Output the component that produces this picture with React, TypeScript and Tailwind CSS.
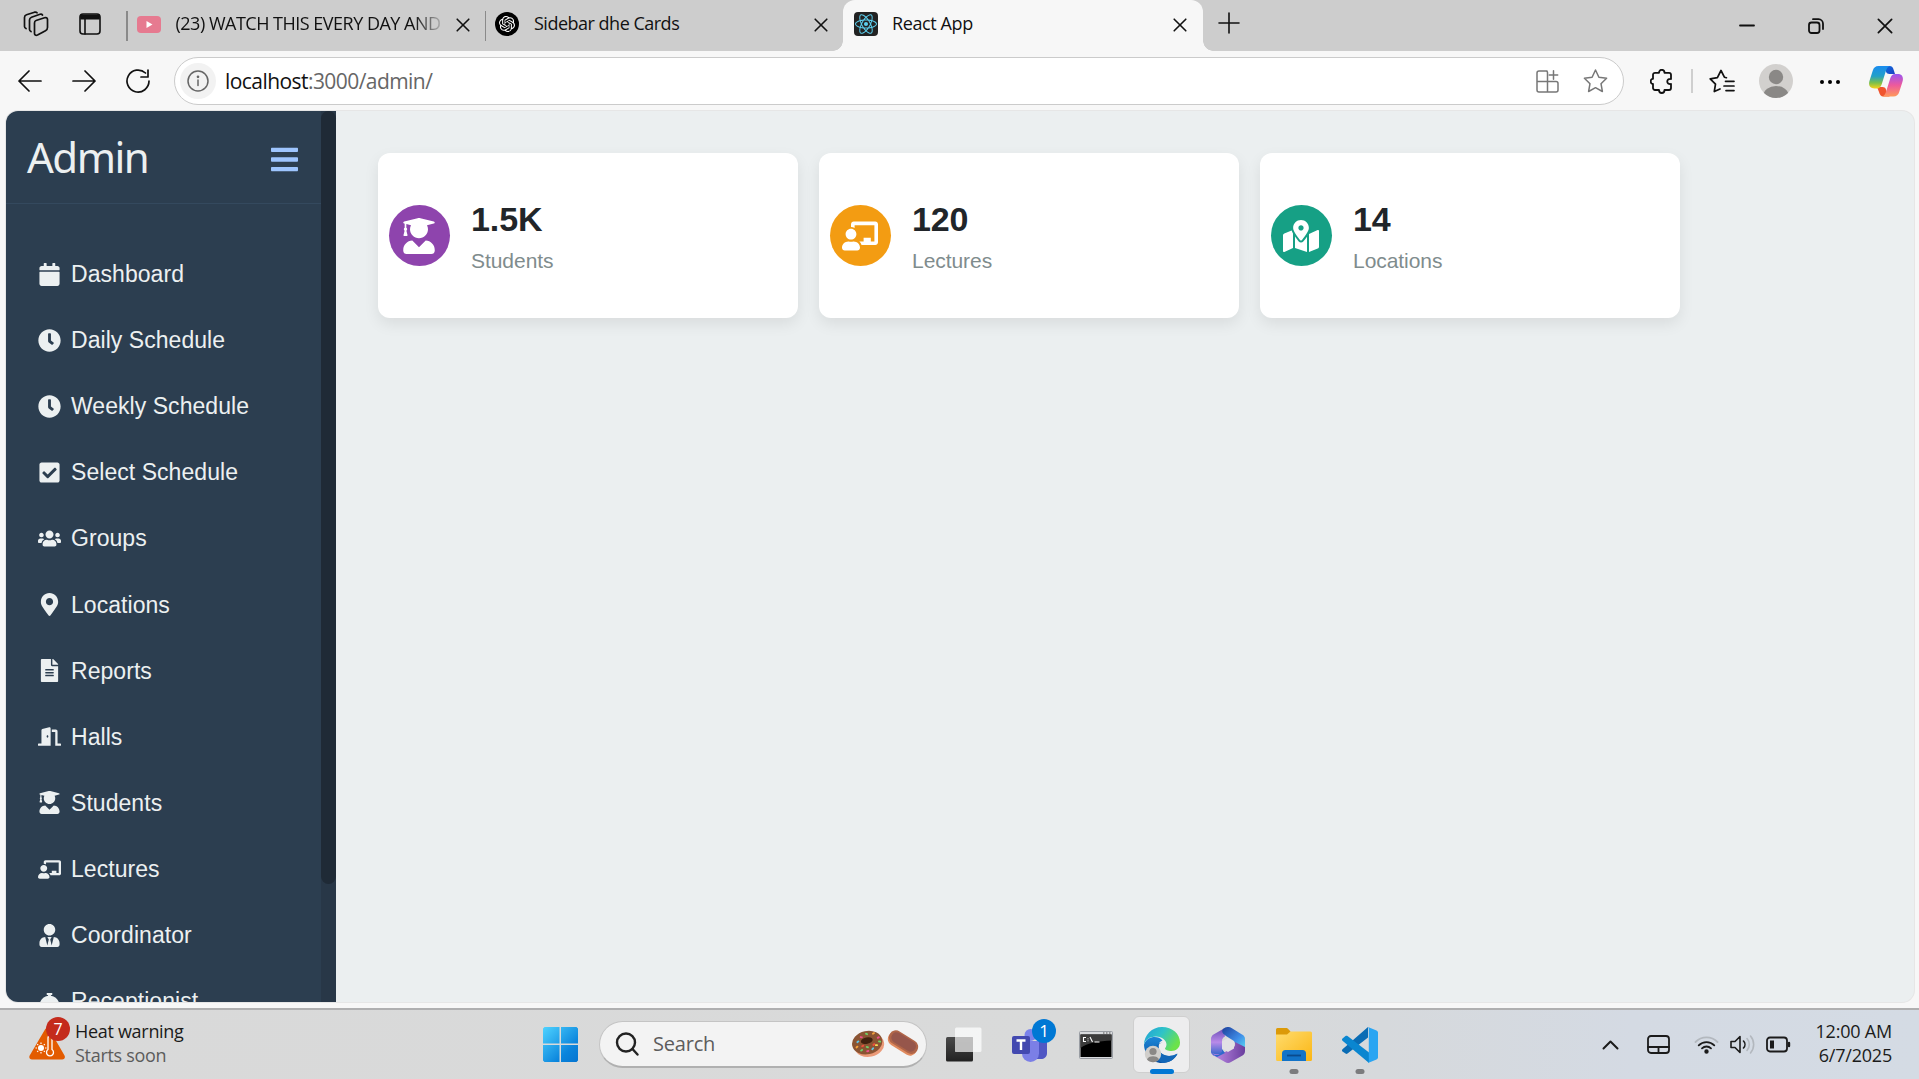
import type { ReactNode } from "react";
import type { IconType } from "react-icons";
import {
  FaBars,
  FaCalendar,
  FaChalkboardTeacher,
  FaCheckSquare,
  FaClock,
  FaConciergeBell,
  FaDoorOpen,
  FaFileAlt,
  FaMapMarkedAlt,
  FaMapMarkerAlt,
  FaUserGraduate,
  FaUsers,
  FaUserTie,
} from "react-icons/fa";
import { SiOpenai, SiReact } from "react-icons/si";

function Line({ w, h, vb, sw = 1.5, className = "", children }: { w: number; h: number; vb?: string; sw?: number; className?: string; children: ReactNode }) {
  return (
    <svg
      width={w}
      height={h}
      viewBox={vb ?? `0 0 ${w} ${h}`}
      fill="none"
      stroke="currentColor"
      strokeWidth={sw}
      strokeLinecap="round"
      strokeLinejoin="round"
      className={`block shrink-0 ${className}`}
    >
      {children}
    </svg>
  );
}

function CloseX({ size = 14, sw = 1.6 }: { size?: number; sw?: number }) {
  return (
    <Line w={size} h={size} vb="0 0 14 14" sw={sw}>
      <path d="M1.200 1.200 12.800 12.800M12.800 1.200 1.200 12.800" />
    </Line>
  );
}

function TabStrip() {
  return (
    <div className="flex h-[51px] shrink-0 items-center bg-[#cdcdcd] pb-[3px] text-[18px] leading-[24px] tracking-[-0.5px] text-[#111]">
      <Line w={26} h={26} className="ml-[23px]" sw={1.7}>
        <path d="M13 9.5 21.5 6.7C23 6.2 24.500 7 24.500 8.500V16.500C24.500 18 24 19 22.500 19.800L14.500 24C12.800 24.800 11.500 24 11.500 22.500V12C11.500 10.500 12 9.800 13 9.500Z" />
        <path d="M8 20.500C7 20 6.500 19.500 6.500 18.500V9C6.500 7.500 7 6.800 8.500 6.200L17 3.300C18 3 19 3.300 19.500 4" />
        <path d="M3 17.500C2 17 1.500 16.500 1.500 15.500V6.500C1.500 5 2 4.300 3.500 3.800L11.500 1.200C12.500 1 13.500 1.200 14 1.800" />
      </Line>
      <Line w={22} h={22} className="ml-[30px]" sw={1.6}>
        <rect x="1" y="1" width="20" height="20" rx="3" />
        <path d="M6 6v15" />
        <path d="M2 2.200h18v3.600H2Z" fill="currentColor" />
      </Line>
      <div className="mt-[3px] ml-[25px] h-[30px] w-[1.500px] bg-[#8a8a8a]" />
      <svg width="24" height="17" viewBox="0 0 24 17" className="ml-[9px] block shrink-0">
        <rect width="24" height="17" rx="4" fill="#e67a90" />
        <path d="M9.500 5v7l6-3.500Z" fill="#fff" />
      </svg>
      <div className="-mt-[2px] ml-[15px] w-[267px] whitespace-nowrap tracking-[-0.5px] [mask-image:linear-gradient(to_right,black_238px,transparent_270px)]">
        (23) WATCH THIS EVERY DAY AND
      </div>
      <div className="mt-px ml-[13px]">
        <CloseX />
      </div>
      <div className="mt-[3px] ml-[15px] h-[30px] w-[1.500px] bg-[#8a8a8a]" />
      <div className="ml-[9px] flex size-6 items-center justify-center rounded-full bg-black">
        <SiOpenai className="size-[16px] text-white" />
      </div>
      <div className="-mt-[2px] ml-[15px] w-[280px] whitespace-nowrap">Sidebar dhe Cards</div>
      <div className="mt-px">
        <CloseX />
      </div>
      <div className="relative -mb-[3px] ml-[15px] flex w-[360px] items-center self-stretch rounded-t-[12px] bg-[#f7f7f7] pb-[3px]">
        <div className="absolute bottom-0 -left-[10px] size-[10px] bg-[radial-gradient(circle_at_0_0,transparent_9.500px,#f7f7f7_10px)]" />
        <div className="absolute -right-[10px] bottom-0 size-[10px] bg-[radial-gradient(circle_at_100%_0,transparent_9.500px,#f7f7f7_10px)]" />
        <div className="ml-[11px] flex size-6 items-center justify-center rounded-[4px] bg-[#222]">
          <SiReact className="size-[22px] text-[#5ccfee]" />
        </div>
        <div className="-mt-[2px] ml-[14px] w-[281px] tracking-[-0.4px]">React App</div>
        <div className="mt-px">
          <CloseX />
        </div>
      </div>
      <Line w={22} h={22} className="-mt-[2px] ml-[15px]" sw={1.600}>
        <path d="M11 1v20M1 11h20" />
      </Line>
      <Line w={16} h={16} className="mt-[3px] ml-auto" sw={1.800}>
        <path d="M1 7.500h14" />
      </Line>
      <Line w={16} h={16} className="mt-[3px] ml-[53px]" sw={1.800}>
        <rect x="1" y="4.500" width="10.500" height="10.500" rx="2.500" />
        <path d="M5 1.200h5.500a4.500 4.500 0 0 1 4.500 4.500V11" />
      </Line>
      <div className="mt-[3px] mr-[26px] ml-[53px]">
        <CloseX size={16} sw={1.500} />
      </div>
    </div>
  );
}

function CopilotLogo() {
  return (
    <svg width="34" height="31" viewBox="0 0 34 31" className="ml-[29px] block shrink-0">
      <defs>
        <linearGradient id="cpA" x1="0" y1="0" x2="0" y2="1">
          <stop offset="0" stopColor="#1a8cf0" />
          <stop offset=".45" stopColor="#22a0c8" />
          <stop offset=".75" stopColor="#7cc04a" />
          <stop offset="1" stopColor="#f8d21a" />
        </linearGradient>
        <linearGradient id="cpB" x1="0" y1="0" x2="0" y2="1">
          <stop offset="0" stopColor="#9b55f0" />
          <stop offset=".5" stopColor="#ee5a9c" />
          <stop offset="1" stopColor="#ff9a5a" />
        </linearGradient>
        <linearGradient id="cpC" x1="0" y1="0" x2="1" y2="1">
          <stop offset="0" stopColor="#0f6fe0" />
          <stop offset="1" stopColor="#1c3fc0" />
        </linearGradient>
      </defs>
      <path d="M17 0h3.500C23 0 24 1.500 24.700 4L26 8h-5.500C17 8 17 5 16 3Z" fill="url(#cpC)" />
      <path d="M8 21h5.500C17 21 17 24 18 26.500c.5 2 1.500 3.500 3 4h-6.500c-2.700 0-3.800-2-4.500-4.500Z" fill="#f0552e" />
      <path d="M9.500 0H21c-2.500.5-3.500 3-4.300 5.500L12.800 18c-.8 2.600-2.300 4.500-5 4.500H5.500C.5 22.500-.8 19 .6 14.500L3.800 4.500C4.700 1.700 6.500 0 9.500 0Z" fill="url(#cpA)" />
      <path d="M24.500 30.500H13c2.500-.5 3.500-3 4.300-5.500l3.900-12.500c.8-2.600 2.300-4.500 5-4.500h2.300c5 0 6.300 3.500 4.900 8l-3.200 10c-.9 2.800-2.700 4.500-5.700 4.500Z" fill="url(#cpB)" />
    </svg>
  );
}

function Toolbar() {
  return (
    <div className="flex h-[60px] shrink-0 items-center bg-[#f7f7f7] text-[#111]">
      <Line w={24} h={22} className="ml-[18px]" sw={1.700}>
        <path d="M23 11H1M11 1 1 11l10 10" />
      </Line>
      <Line w={24} h={22} className="ml-[30px]" sw={1.700}>
        <path d="M1 11h22M13 1l10 10-10 10" />
      </Line>
      <Line w={24} h={24} className="ml-[30px]" sw={1.700}>
        <path d="M23 12A11 11 0 1 1 19.500 4M22 1v7h-7" />
      </Line>
      <div className="ml-[24px] flex h-12 w-[1450px] items-center rounded-full border border-[#cbcbcb] bg-white">
        <div className="ml-[5px] flex size-9 items-center justify-center rounded-full bg-[#f2f2f2] text-[#666]">
          <Line w={22} h={22} sw={1.500}>
            <circle cx="11" cy="11" r="10" />
            <path d="M11 10v5.500" />
            <circle cx="11" cy="6.800" r=".6" fill="currentColor" />
          </Line>
        </div>
        <div className="ml-[9px] text-[21px] leading-[28px] tracking-[-0.56px] whitespace-nowrap">
          localhost<span className="text-[#666]">:3000/admin/</span>
        </div>
        <Line w={23} h={23} className="ml-auto text-[#777]" sw={1.500}>
          <path d="M11 1H3a2 2 0 0 0-2 2v17a2 2 0 0 0 2 2h17a2 2 0 0 0 2-2v-6.500a2 2 0 0 0-2-2H1M11.500 22V2.500A1.500 1.500 0 0 0 10 1M17.500.8v8.400M13.300 5h8.400" />
        </Line>
        <Line w={25} h={24} className="mr-[15px] ml-[24px] text-[#777]" sw={1.500}>
          <path d="m12.500 1 3.400 7.200 7.700 1-5.600 5.500 1.400 7.800-6.900-3.800-6.900 3.800L7 14.700 1.400 9.200l7.700-1Z" />
        </Line>
      </div>
      <Line w={23} h={25} className="ml-[26px]" sw={1.800}>
        <path d="M5 3.800h4c0-4 5.500-4 5.500 0H19a2 2 0 0 1 2 2v4.200c-5-.8-5 5.800 0 5V19a2 2 0 0 1-2 2h-4.500c0 4-5.500 4-5.500 0H5a2 2 0 0 1-2-2v-4c-3 .2-3-5.500 0-5.200V5.800a2 2 0 0 1 2-2Z" />
      </Line>
      <div className="ml-[18px] h-6 w-[1.500px] bg-[#cfcfcf]" />
      <Line w={26} h={24} className="ml-[16px]" sw={1.700}>
        <path d="M11 20 5.300 22.500l1.200-7.300L1.200 9.800l7.200-1.100L12 1.500l3.400 6.700 2 .5M16.500 12.300H25M15 17h10M17 21.600h8" />
      </Line>
      <svg width="34" height="34" viewBox="0 0 34 34" className="ml-[24px] block shrink-0">
        <clipPath id="av">
          <circle cx="17" cy="17" r="17" />
        </clipPath>
        <g clipPath="url(#av)">
          <rect width="34" height="34" fill="#d2d0ce" />
          <circle cx="17" cy="13" r="7.200" fill="#8a8886" />
          <ellipse cx="17" cy="31" rx="12.500" ry="9" fill="#8a8886" />
        </g>
      </svg>
      <svg width="20" height="6" viewBox="0 0 20 6" className="mt-[2px] ml-[27px] block shrink-0">
        <circle cx="2" cy="3" r="2" />
        <circle cx="10" cy="3" r="2" />
        <circle cx="18" cy="3" r="2" />
      </svg>
      <CopilotLogo />
    </div>
  );
}

const menu: { icon: IconType; label: string }[] = [
  { icon: FaCalendar, label: "Dashboard" },
  { icon: FaClock, label: "Daily Schedule" },
  { icon: FaClock, label: "Weekly Schedule" },
  { icon: FaCheckSquare, label: "Select Schedule" },
  { icon: FaUsers, label: "Groups" },
  { icon: FaMapMarkerAlt, label: "Locations" },
  { icon: FaFileAlt, label: "Reports" },
  { icon: FaDoorOpen, label: "Halls" },
  { icon: FaUserGraduate, label: "Students" },
  { icon: FaChalkboardTeacher, label: "Lectures" },
  { icon: FaUserTie, label: "Coordinator" },
  { icon: FaConciergeBell, label: "Receptionist" },
];

function Sidebar() {
  return (
    <aside className="flex w-[330px] shrink-0 bg-[#2c3e50] text-[#ecf0f1]">
      <div className="w-[315px] overflow-hidden">
        <div className="flex h-[93px] items-center justify-between border-b border-[#34495e] pr-[23px] pl-[21px]">
          <h2 className="font-['Noto_Sans',sans-serif] text-[42px] leading-[50px] tracking-[-1.500px]">Admin</h2>
          <FaBars className="mt-[5px] h-[31px] w-[27px] text-[#9ec5fe]" />
        </div>
        <nav className="pt-[37px] font-['Liberation_Sans',Arial,sans-serif]">
          {menu.map(({ icon: Icon, label }) => (
            <div key={label} className="flex h-[66.120px] items-center gap-[10px] pl-[32px] text-[23px] leading-[34px] tracking-[0.050px]">
              <Icon className="size-[23px] shrink-0" />
              <span>{label}</span>
            </div>
          ))}
        </nav>
      </div>
      <div className="w-[15px] bg-[#283747]">
        <div className="h-[773px] rounded-full bg-[#1f2a36]" />
      </div>
    </aside>
  );
}

function StatCard({ icon: Icon, tone, value, label }: { icon: IconType; tone: string; value: string; label: string }) {
  return (
    <div className="flex h-[165px] w-[420px] items-center rounded-[12px] bg-white pl-[11px] shadow-[0_6px_15px_rgba(0,0,0,0.08)]">
      <div className={`flex size-[61px] items-center justify-center rounded-full text-white ${tone}`}>
        <Icon className="mr-px size-[36px]" />
      </div>
      <div className="mt-[4px] ml-[21px]">
        <div className="text-[34px] leading-[40px] font-bold tracking-[-0.100px] text-[#212529]">{value}</div>
        <div className="mt-[6px] text-[21px] leading-[32px] tracking-[-0.05px] text-[#7f8c8d]">{label}</div>
      </div>
    </div>
  );
}

function WindowsLogo() {
  return (
    <svg width="35" height="35" viewBox="0 0 35 35" className="block shrink-0">
      <linearGradient id="win" x1="0" y1="0" x2="35" y2="35" gradientUnits="userSpaceOnUse">
        <stop offset="0" stopColor="#4fd3ff" />
        <stop offset=".7" stopColor="#0a84dc" />
        <stop offset="1" stopColor="#0574d0" />
      </linearGradient>
      <path d="M1.500 0H16.500V16.500H0V1.500ZM18 0h15.500L35 1.500v15H18ZM0 18h16.500v17h-15L0 33.500ZM18 18h17v15.500L33.500 35H18Z" fill="url(#win)" />
    </svg>
  );
}

const sprinkles = [
  [6, 9, "#5fc7e8"], [11, 5, "#f0508c"], [17, 3, "#6fd36a"], [23, 4, "#f6a23c"], [27, 9, "#f0508c"], [4, 14, "#f6a23c"],
  [8, 18, "#6fd36a"], [14, 20, "#f0508c"], [19, 19, "#5fc7e8"], [24, 16, "#f6e05c"], [28, 13, "#6fd36a"], [10, 14, "#f0503c"],
  [21, 15, "#f0503c"], [15, 16, "#6fd36a"],
] as const;

function SearchArt() {
  return (
    <svg width="67" height="28" viewBox="0 0 67 28" className="block shrink-0">
      <g transform="rotate(-12 16 14)">
        <ellipse cx="17" cy="15.500" rx="15" ry="11.500" fill="#eb9a78" />
        <ellipse cx="15.500" cy="12.500" rx="15.300" ry="11.700" fill="#8a5433" />
        <ellipse cx="15.500" cy="10.500" rx="6" ry="3.200" fill="#41210f" />
        {sprinkles.map(([x, y, c]) => (
          <rect key={`${x}-${y}`} x={x - 1.300} y={y} width="3" height="1.800" rx=".7" fill={c} transform={`rotate(${(x * 37) % 70 - 35} ${x} ${y})`} />
        ))}
      </g>
      <g transform="rotate(32 51 13)">
        <rect x="35" y="7" width="32" height="14" rx="7" fill="#e08a5e" />
        <rect x="35" y="5" width="32" height="14" rx="7" fill="#b06548" />
        <rect x="37.500" y="6.500" width="27" height="10.500" rx="5" fill="#96564b" />
      </g>
    </svg>
  );
}

function TaskViewIcon() {
  return (
    <svg width="36" height="35" viewBox="0 0 36 35">
      <linearGradient id="tv" x1="0" y1="0" x2="0" y2="1">
        <stop offset="0" stopColor="#4a4a4a" />
        <stop offset="1" stopColor="#222" />
      </linearGradient>
      <rect x="0" y="10" width="27" height="24.500" rx="1.500" fill="url(#tv)" />
      <rect x="9" y=".5" width="26.500" height="24.500" rx="1.500" fill="#fafafa" fillOpacity=".82" />
      <rect x="9" y="10" width="18" height="15" fill="#b5b5b5" fillOpacity=".75" />
    </svg>
  );
}

function TeamsIcon() {
  return (
    <svg width="36" height="36" viewBox="0 0 36 36">
      <circle cx="29" cy="8" r="4" fill="#4f55c8" />
      <path d="M22 14h13v12c0 4-3 6-6 6h-7Z" fill="#5057c4" />
      <circle cx="18.500" cy="8" r="6" fill="#7b83eb" />
      <path d="M10 14h17v12.500a8.500 8.500 0 0 1-17 0Z" fill="#7b7fe6" />
      <rect x="0" y="9" width="18" height="18" rx="2" fill="#4349b0" />
      <path d="M4.500 13.500h9M9 13.500v9.500" stroke="#fff" strokeWidth="2.400" />
    </svg>
  );
}

function TerminalIcon() {
  return (
    <svg width="34" height="28" viewBox="0 0 34 28">
      <rect x=".5" y=".5" width="33" height="27" rx="1" fill="#d8dadd" stroke="#999da3" />
      <rect x="1.500" y="3.500" width="31" height="22.500" fill="#000" />
      <path d="M1.500 3.500h31v6C20 10 8 12 1.500 17Z" fill="#3b3b3b" />
      <path d="M7 6.500H4.500v4H7M9 7.500v.8M9 9.500v.8M11 6l2.500 5M15.500 11h5" stroke="#fff" strokeWidth="1.100" fill="none" />
      <path d="M24 2h1.500M27 2h1.500M30 2h1.500" stroke="#555" strokeWidth="1.200" />
    </svg>
  );
}

function EdgeIcon() {
  return (
    <svg width="36" height="36" viewBox="0 0 36 36">
      <defs>
        <linearGradient id="edA" x1="0" y1="0" x2="1" y2=".5">
          <stop offset="0" stopColor="#1f9fd8" />
          <stop offset=".5" stopColor="#2fc3c8" />
          <stop offset="1" stopColor="#6be24a" />
        </linearGradient>
        <linearGradient id="edB" x1="0" y1="0" x2="0" y2="1">
          <stop offset="0" stopColor="#1b86d8" />
          <stop offset="1" stopColor="#0a4f9e" />
        </linearGradient>
      </defs>
      <path d="M0 17.500C0 26 7 36 18 36c7.500 0 13-4 15.500-9-8 4-19 2-19-8 0-3 2-5 4-5.500C14 8 3 9 0 17.500Z" fill="url(#edB)" />
      <path d="M0 18C0 8 8 0 18 0c10.500 0 18 7 18 15.500 0 5.500-4 8.500-8.500 8.500-3.500 0-6.500-1.200-6.500-2.500 0-.8 1.500-1.500 1.500-4 0-4-4.500-8-10.500-8C5.500 9.500 1 13 0 18Z" fill="url(#edA)" />
      <path d="M14.500 19c0 9 9 13 19 7.500-3 6-8.500 9.500-15 9.500-5-2-9-8-8-13 .5-4 4-7 8-7.500-2.500.5-4 1.500-4 3.500Z" fill="#1267b8" />
      <circle cx="9" cy="27" r="8.200" fill="#d0cecb" />
      <circle cx="9" cy="24.500" r="3.600" fill="#8a8886" />
      <path d="M3 32.500c1-4.500 11-4.500 12 0-3 3.500-9 3.500-12 0Z" fill="#8a8886" />
    </svg>
  );
}

function M365Icon() {
  return (
    <svg width="34" height="36" viewBox="0 0 34 36">
      <defs>
        <linearGradient id="mA" x1="0" y1="0" x2="0" y2="1">
          <stop offset="0" stopColor="#6b4fb8" />
          <stop offset=".5" stopColor="#b98ae8" />
          <stop offset="1" stopColor="#2a62c8" />
        </linearGradient>
        <linearGradient id="mB" x1="0" y1="0" x2="1" y2="1">
          <stop offset="0" stopColor="#1d3f9a" />
          <stop offset=".6" stopColor="#3f8de8" />
          <stop offset="1" stopColor="#5cd8f0" />
        </linearGradient>
        <linearGradient id="mC" x1="0" y1="0" x2="1" y2="0">
          <stop offset="0" stopColor="#c490ec" />
          <stop offset="1" stopColor="#6a3e9e" />
        </linearGradient>
      </defs>
      <path d="M13 1.500 2.500 7.500C1 8.500 0 10 0 12v12c0 3 2 5 5 5s6-2 6-6v-9c0-2 1-3.500 3-4.500Z" fill="url(#mA)" />
      <path d="M12 2c3-2.500 6-2.500 8.500-1L31 7.500c2 1 3 2.500 3 4.500v10l-10-6-1-2-8-5c-3-2-5-4-3-7Z" fill="url(#mB)" />
      <path d="M0 24.500c0 3 9 4 14 .5l9-5c1.500-1 1-3 1-5l10 5v4c0 2-1 3.500-2.500 4.500L20 35c-2 1.200-4 1.200-6 0L2.500 28.500C1 27.500 0 26 0 24.500Z" fill="url(#mC)" />
      <path d="M0 22c0 4 3 6 5.500 6S11 26 11 22l3 4-8 4-3.500-2C1 27 0 25 0 24Z" fill="#2f68cc" />
      <path d="m17 11 6 3.500v7L17 25l-6-3.500v-7Z" fill="#e2e2e4" />
    </svg>
  );
}

function ExplorerIcon() {
  return (
    <svg width="36" height="33" viewBox="0 0 36 33">
      <linearGradient id="ex" x1="0" y1="0" x2="1" y2="1">
        <stop offset="0" stopColor="#ffdc6e" />
        <stop offset="1" stopColor="#fbb614" />
      </linearGradient>
      <path d="M0 1.500A1.500 1.500 0 0 1 1.500 0H10c1 0 1.500.3 2.200 1l2.300 2.500V8H0Z" fill="#dc9a08" />
      <path d="M0 6.500h11l3.500-3H34.500A1.500 1.500 0 0 1 36 5v26.500a1.500 1.500 0 0 1-1.500 1.500h-33A1.500 1.500 0 0 1 0 31.500Z" fill="url(#ex)" />
      <path d="M6 33v-7.500a3.500 3.500 0 0 1 3.500-3.500h17a3.500 3.500 0 0 1 3.500 3.500V33Z" fill="#1273c8" />
      <path d="M11 27.500h14" stroke="#0b4a8c" strokeWidth="1.800" />
    </svg>
  );
}

function VsCodeIcon() {
  return (
    <svg width="36" height="36" viewBox="0 0 36 36">
      <path d="M26 0v10.500L5.500 26.500c-.8.500-1.400.500-2 0L.5 24.500C-.2 23.800-.2 23 .5 22.300Z" fill="#0a6cb4" />
      <path d="M.5 11.500 3.500 9c.8-.5 1.400-.4 2 0L27 25.500V36L.5 13.700C-.2 13-.2 12.200.5 11.500Z" fill="#0a86d0" />
      <path d="M26 0l8.500 3.500c1 .5 1.500 1.200 1.500 2.200v24.600c0 1-.5 1.700-1.500 2.200L26 36c.5-.5.8-1.200.8-2V2C26.800 1.200 26.500.5 26 0Z" fill="#2aa5f2" />
    </svg>
  );
}

function TaskItem({ children, active = false, mark = "" }: { children: ReactNode; active?: boolean; mark?: string }) {
  return (
    <div className="relative flex h-[56px] w-[66px] shrink-0 items-center justify-center">
      {active && <div className="absolute -top-px right-[5px] bottom-0 left-[4px] rounded-[6px] border border-[#cfcfcf] bg-[#ededee]" />}
      <div className="relative">{children}</div>
      {mark && <div className={`absolute -bottom-px left-1/2 h-[5px] -translate-x-1/2 rounded-full ${mark}`} />}
    </div>
  );
}

function Taskbar() {
  return (
    <footer className="flex h-[71px] shrink-0 items-center border-t-2 border-[#afafb0] bg-[linear-gradient(to_right,#d9d9d9_0%,#d9dada_60%,#d6d9dc_72%,#d4dae3_85%,#d4dbe4_100%)] text-[18px] leading-[24px] text-[#1b1b1b]">
      <div className="relative mb-[11px] ml-[29px] h-[44px] w-[41px]">
        <svg width="41" height="44" viewBox="0 0 41 44" className="block">
          <path d="M16 12.500c1-2 3.500-2 4.500 0l15 26c1 2 0 4-2.300 4H3c-2.300 0-3.300-2-2.300-4Z" fill="#e35b00" />
          <circle cx="12" cy="31" r="3" fill="#fff" />
          <path d="M12 25.500v1.500M12 35v1.500M6.500 31H8M16 31h1.500M8.200 27.200l1 1M14.800 33.800l1 1M8.200 34.800l1-1M14.800 28.200l1-1" stroke="#fff" strokeWidth="1.200" />
          <path d="M19 21a2 2 0 0 1 4 0v11.500a3.500 3.500 0 1 1-4 0Z" fill="#e35b00" stroke="#fff" strokeWidth="1.300" />
        </svg>
        <div className="absolute top-0 right-0 flex size-6 items-center justify-center rounded-full bg-[#c42b1c] text-[16px] text-white">7</div>
      </div>
      <div className="-mt-[3px] ml-[5px] w-[468px] tracking-[-0.300px]">
        <div>Heat warning</div>
        <div className="text-[#5c5c5c]">Starts soon</div>
      </div>
      <WindowsLogo />
      <div className="ml-[21px] flex h-[47px] w-[328px] items-center rounded-full border border-b-2 border-[#c4c4c4] border-b-[#b0b0b0] bg-[#f3f3f3]">
        <Line w={24} h={24} className="ml-[15px] text-[#222]" sw={2.400}>
          <circle cx="11" cy="10.500" r="9" />
          <path d="m17.500 17 5 5.500" />
        </Line>
        <div className="ml-[14px] w-[199px] text-[20px] tracking-[-0.200px] text-[#5c5c5c]">Search</div>
        <SearchArt />
      </div>
      <div className="ml-[4px] flex">
        <TaskItem>
          <TaskViewIcon />
        </TaskItem>
        <TaskItem>
          <TeamsIcon />
          <div className="absolute -top-[8px] -right-[8px] flex size-6 items-center justify-center rounded-full bg-[#0078d4] text-[17px] text-white">1</div>
        </TaskItem>
        <TaskItem>
          <TerminalIcon />
        </TaskItem>
        <TaskItem active mark="w-6 bg-[#0078d4]">
          <EdgeIcon />
        </TaskItem>
        <TaskItem>
          <M365Icon />
        </TaskItem>
        <TaskItem mark="w-[9px] bg-[#7b7c7e]">
          <ExplorerIcon />
        </TaskItem>
        <TaskItem mark="w-[9px] bg-[#7b7c7e]">
          <VsCodeIcon />
        </TaskItem>
      </div>
      <div className="mr-[27px] ml-auto flex items-center">
        <Line w={17} h={10} sw={2}>
          <path d="M1.500 8.500l7-7 7 7" />
        </Line>
        <Line w={23} h={19} className="ml-[28px]" sw={1.800}>
          <rect x="1" y="1" width="21" height="17" rx="3" />
          <path d="M1 12h21M11.500 12v6" />
        </Line>
        <Line w={25} h={19} className="ml-[24px]" sw={1.800}>
          <path d="M1.500 7a15.500 15.500 0 0 1 22 0" stroke="#b3b8be" />
          <path d="M4.700 10.300a11 11 0 0 1 15.600 0M8 13.300a6.500 6.500 0 0 1 9 0" />
          <circle cx="12.500" cy="16.500" r="1.300" fill="currentColor" />
        </Line>
        <Line w={25} h={21} className="ml-[11px]" sw={1.600}>
          <path d="M1 7.500h4l5-5v16l-5-5H1Z" />
          <path d="M13.500 7a5 5 0 0 1 0 7" />
          <path d="M17 4.500a9 9 0 0 1 0 12M20.500 2a13 13 0 0 1 0 17" stroke="#b3b8be" />
        </Line>
        <Line w={25} h={17} className="ml-[11px]" sw={1.800}>
          <rect x="1" y="1.500" width="20" height="14" rx="3" />
          <rect x="4" y="4.500" width="4" height="8" fill="currentColor" stroke="none" />
          <path d="M23 7v3" strokeWidth="2.400" />
        </Line>
        <div className="-mt-[3px] ml-[24px] text-right tracking-[-0.200px] whitespace-nowrap">
          <div>12:00 AM</div>
          <div>6/7/2025</div>
        </div>
      </div>
    </footer>
  );
}

export default function App() {
  return (
    <div className="flex h-[1079px] w-[1919px] flex-col overflow-hidden bg-[#f7f7f7] font-['Open_Sans','Noto_Sans',sans-serif]">
      <TabStrip />
      <Toolbar />
      <div className="mr-[5px] mb-[6px] ml-[6px] flex min-h-0 flex-1 overflow-hidden rounded-[12px] bg-[#ebeff0] shadow-[0_0_0_1px_#e6e6e6]">
        <Sidebar />
        <main className="flex gap-[21px] pt-[42px] pl-[42px] font-['Liberation_Sans',Arial,sans-serif]">
          <StatCard icon={FaUserGraduate} tone="bg-[#8e44ad]" value="1.5K" label="Students" />
          <StatCard icon={FaChalkboardTeacher} tone="bg-[#f39c12]" value="120" label="Lectures" />
          <StatCard icon={FaMapMarkedAlt} tone="bg-[#16a085]" value="14" label="Locations" />
        </main>
      </div>
      <Taskbar />
    </div>
  );
}
